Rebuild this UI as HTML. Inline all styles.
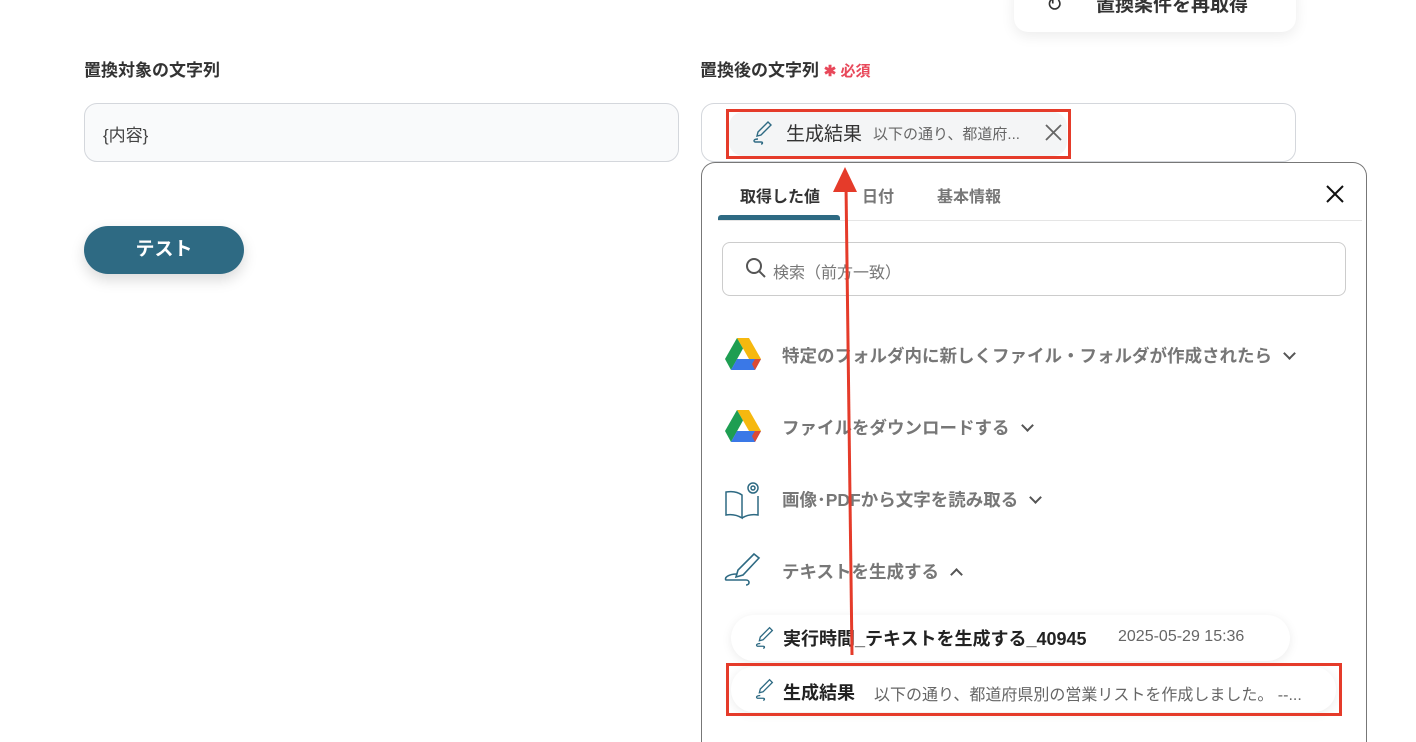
<!DOCTYPE html>
<html><head><meta charset="utf-8"><style>
*{box-sizing:border-box;margin:0;padding:0}
html,body{width:1416px;height:742px;overflow:hidden}
body{background:#fff;position:relative;font-family:"Liberation Sans","Noto Sans CJK JP",sans-serif;color:#333}
.a{position:absolute}
.lbl{font-size:17px;font-weight:bold;color:#333}
.item{position:absolute;left:782px;font-size:17.5px;font-weight:bold;color:#777;display:flex;align-items:center;gap:13px}
.chev{width:9px;height:9px;border-right:2px solid #555;border-bottom:2px solid #555;transform:rotate(45deg);margin-top:-5px}
</style></head><body>
<div class="a" style="left:1014px;top:-20px;width:282px;height:52px;background:#fff;border-radius:14px;box-shadow:0 4px 14px rgba(0,0,0,.08)"></div>
<div class="a" style="left:1046px;top:-8px;font-size:20px;color:#333">↻</div>
<div class="a" style="left:1096px;top:-10px;font-size:19px;font-weight:bold;color:#333">置換条件を再取得</div>

<div class="a lbl" style="left:84px;top:56px">置換対象の文字列</div>
<div class="a" style="left:84px;top:103px;width:595px;height:59px;background:#f9fafb;border:1px solid #d4d7dc;border-radius:13px"></div>
<div class="a" style="left:103px;top:121px;font-size:17px;color:#444">{内容}</div>
<div class="a" style="left:84px;top:226px;width:160px;height:48px;background:#2e6a83;border-radius:24px;box-shadow:0 6px 14px rgba(0,0,0,.15);color:#fff;font-size:19px;font-weight:bold;text-align:center;line-height:48px">テスト</div>

<div class="a lbl" style="left:700px;top:56px">置換後の文字列 <span style="color:#e8485a;font-size:15px">✱ 必須</span></div>
<div class="a" style="left:701px;top:103px;width:595px;height:59px;background:#fff;border:1px solid #d4d7dc;border-radius:13px"></div>
<div class="a" style="left:729px;top:112px;width:338px;height:44px;background:#f4f5f6;border-radius:14px"></div>
<svg class="a" style="left:748px;top:118px" width="28" height="28" viewBox="0 0 28 28" fill="none" stroke="#2e6a83" stroke-width="1.4"><path d="M20 4l3 3-10 10-4 1 1-4z"/><path d="M10 21c-4 0-5 2-3 3h6c2 0 2 2 0 2"/></svg>
<div class="a" style="left:786px;top:119px;font-size:19px;color:#333">生成結果</div>
<div class="a" style="left:873px;top:123px;font-size:15px;color:#666">以下の通り、都道府...</div>
<svg class="a" style="left:1045px;top:124px" width="17" height="17" viewBox="0 0 17 17" stroke="#666" stroke-width="1.8"><path d="M1 1l15 15M16 1L1 16"/></svg>
<div class="a" style="left:726px;top:109px;width:345px;height:50px;border:3px solid #e53b2a"></div>

<div class="a" style="left:701px;top:162px;width:666px;height:580px;border:1px solid #777;border-bottom:none;border-radius:14px 14px 0 0;background:#fff"></div>
<div class="a" style="left:740px;top:183px;font-size:16px;font-weight:bold;color:#333">取得した値</div>
<div class="a" style="left:862px;top:183px;font-size:16px;font-weight:bold;color:#777">日付</div>
<div class="a" style="left:937px;top:183px;font-size:16px;font-weight:bold;color:#777">基本情報</div>
<div class="a" style="left:718px;top:220px;width:644px;height:1px;background:#e5e5e5"></div>
<div class="a" style="left:718px;top:215px;width:122px;height:5px;background:#2e6a83;border-radius:3px 3px 0 0"></div>
<svg class="a" style="left:1325px;top:184px" width="20" height="20" viewBox="0 0 20 20" stroke="#111" stroke-width="2"><path d="M2 2l16 16M18 2L2 18"/></svg>
<div class="a" style="left:722px;top:242px;width:624px;height:54px;border:1px solid #ccc;border-radius:8px"></div>
<svg class="a" style="left:744px;top:256px" width="24" height="24" viewBox="0 0 24 24" fill="none" stroke="#555" stroke-width="2"><circle cx="10" cy="10" r="7"/><path d="M15 15l6 6"/></svg>
<div class="a" style="left:773px;top:259px;font-size:16px;color:#777">検索（前方一致）</div>

<svg class="a" style="left:725px;top:338px" width="36" height="32" viewBox="0 0 36 32"><path d="M12 0h12L36 21H24z" fill="#f6b80f"/><path d="M12 0l6 10.5L6 32 0 21z" fill="#1e9e52"/><path d="M6 32h24l6-11H12z" fill="#3a78e7"/><path d="M30 32l6-11h-6l-3 5z" fill="#db4a35"/></svg>
<div class="item" style="top:343px">特定のフォルダ内に新しくファイル・フォルダが作成されたら <span class="chev"></span></div>
<svg class="a" style="left:725px;top:410px" width="36" height="32" viewBox="0 0 36 32"><path d="M12 0h12L36 21H24z" fill="#f6b80f"/><path d="M12 0l6 10.5L6 32 0 21z" fill="#1e9e52"/><path d="M6 32h24l6-11H12z" fill="#3a78e7"/><path d="M30 32l6-11h-6l-3 5z" fill="#db4a35"/></svg>
<div class="item" style="top:415px">ファイルをダウンロードする <span class="chev"></span></div>
<svg class="a" style="left:724px;top:480px" width="38" height="40" viewBox="0 0 38 40" fill="none" stroke="#2e6a83" stroke-width="1.5"><path d="M2 12v23c6-1 11 0 16 3V15c-4-3-10-4-16-3z"/><path d="M18 38c5-3 10-4 16-3V16"/><circle cx="29" cy="8" r="5"/><circle cx="29" cy="8" r="2"/></svg>
<div class="item" style="top:487px">画像･PDFから文字を読み取る <span class="chev"></span></div>
<svg class="a" style="left:724px;top:552px" width="40" height="38" viewBox="0 0 40 38" fill="none" stroke="#2e6a83" stroke-width="1.6"><path d="M30 2l5 4-16 17-7 2 2-7z"/><path d="M13 22c-9 0-13 4-11 6h20c4 0 4 5 0 5"/></svg>
<div class="item" style="top:559px">テキストを生成する <span class="chev" style="transform:rotate(225deg);margin-top:5px"></span></div>

<div class="a" style="left:731px;top:615px;width:559px;height:46px;background:#fff;border-radius:23px;box-shadow:0 2px 10px rgba(0,0,0,.08)"></div>
<svg class="a" style="left:751px;top:624px" width="26" height="26" viewBox="0 0 28 28" fill="none" stroke="#2e6a83" stroke-width="1.4"><path d="M20 4l3 3-10 10-4 1 1-4z"/><path d="M10 21c-4 0-5 2-3 3h6c2 0 2 2 0 2"/></svg>
<div class="a" style="left:783px;top:625px;font-size:18px;font-weight:bold;color:#222">実行時間_テキストを生成する_40945</div>
<div class="a" style="left:1118px;top:628px;font-size:16px;color:#666">2025-05-29 15:36</div>

<div class="a" style="left:731px;top:667px;width:605px;height:45px;background:#fff;border-radius:22px;box-shadow:0 2px 10px rgba(0,0,0,.08)"></div>
<svg class="a" style="left:751px;top:676px" width="26" height="26" viewBox="0 0 28 28" fill="none" stroke="#2e6a83" stroke-width="1.4"><path d="M20 4l3 3-10 10-4 1 1-4z"/><path d="M10 21c-4 0-5 2-3 3h6c2 0 2 2 0 2"/></svg>
<div class="a" style="left:783px;top:679px;font-size:18px;font-weight:bold;color:#222">生成結果</div>
<div class="a" style="left:874px;top:681px;font-size:16px;color:#666">以下の通り、都道府県別の営業リストを作成しました。 --...</div>
<div class="a" style="left:726px;top:663px;width:616px;height:53px;border:3px solid #e53b2a"></div>

<svg class="a" style="left:0;top:0" width="1416" height="742"><line x1="852" y1="655" x2="846" y2="185" stroke="#e53b2a" stroke-width="3"/><path d="M845 167l-12 25h24z" fill="#e53b2a"/></svg>
</body></html>
